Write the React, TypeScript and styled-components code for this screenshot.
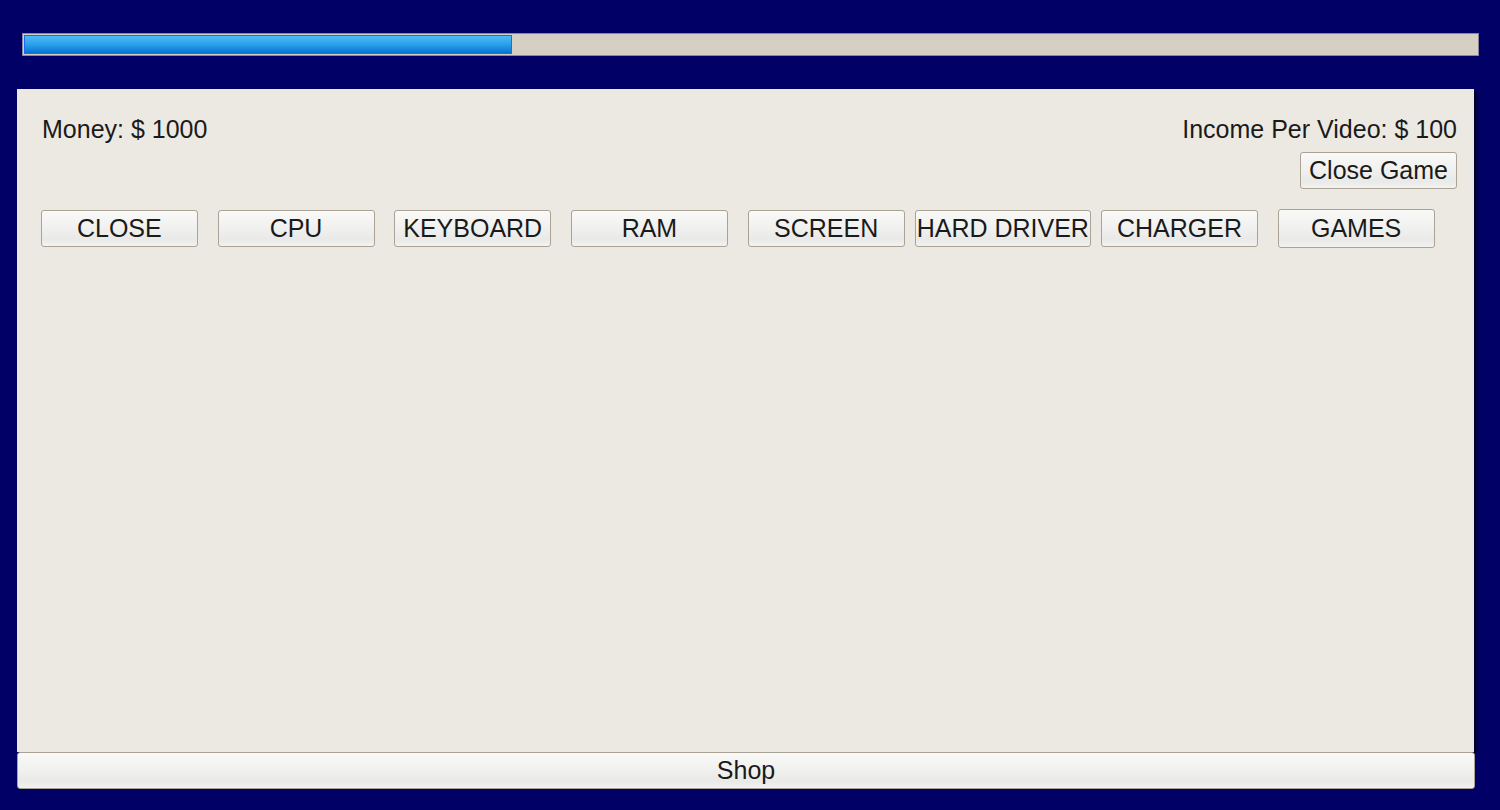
import React from "react";
import styled, { createGlobalStyle } from "styled-components";

const GlobalStyle = createGlobalStyle`
  html, body {
    margin: 0;
    padding: 0;
    background: #000066;
    font-family: "Liberation Sans", Arial, sans-serif;
  }
  #root {
    min-height: 100vh;
  }
`;

const Page = styled.div`
  padding: 33px 0 0 17px;
  width: 1458px;
`;

const ProgressTrack = styled.div`
  margin-left: 5px;
  width: 1457px;
  height: 23px;
  box-sizing: border-box;
  border: 1px solid #8c8798;
  background: #d6d0c4;
  padding: 1px;
`;

const ProgressFill = styled.div`
  height: 100%;
  box-sizing: border-box;
  border: 1px solid #2068ee;
  background: linear-gradient(to bottom, #4cbcf8 0%, #2aa0ea 50%, #0874d6 100%);
`;

const Panel = styled.div`
  margin-top: 33px;
  width: 1457px;
  height: 663px;
  box-sizing: border-box;
  padding: 26px 17px 0 25px;
  background: #ece9e2;
  box-shadow: 3px 2px 3px rgba(0, 0, 0, 0.55);
`;

const Header = styled.div`
  display: flex;
  justify-content: space-between;
  align-items: flex-start;
`;

const Label = styled.div`
  font-size: 25px;
  color: #1a1a1a;
  line-height: 28px;
`;

const RightColumn = styled.div`
  display: flex;
  flex-direction: column;
  align-items: flex-end;
  gap: 9px;
`;

const Button = styled.button<{ $tall?: boolean }>`
  font-family: "Liberation Sans", Arial, sans-serif;
  font-size: 25px;
  color: #1a1a1a;
  height: ${(p) => (p.$tall ? "39px" : "37px")};
  padding: 0 8px;
  box-sizing: border-box;
  background: linear-gradient(to bottom, #f9f9f8 0%, #f0f0ef 50%, #e9e9e8 80%, #f2f2f1 100%);
  border: 1px solid #aaa295;
  border-radius: 3px;
  cursor: pointer;
  white-space: nowrap;
`;

const PartGrid = styled.div`
  margin-top: 20px;
  margin-left: -11px;
  display: grid;
  grid-template-columns: repeat(8, 176.7px);
  justify-items: center;
  align-items: center;
`;

const PartButton = styled(Button)`
  min-width: 157px;
  padding: 0 1px;
`;

const ShopButton = styled(Button)`
  display: block;
  width: 1458px;
`;

const parts = ["CLOSE", "CPU", "KEYBOARD", "RAM", "SCREEN", "HARD DRIVER", "CHARGER", "GAMES"];

const App = () => {
  const progress = 33.6;

  return (
    <>
      <GlobalStyle />
      <Page>
        <ProgressTrack>
          <ProgressFill style={{ width: `${progress}%` }} />
        </ProgressTrack>
        <Panel>
          <Header>
            <Label>Money: $ 1000</Label>
            <RightColumn>
              <Label>Income Per Video: $ 100</Label>
              <Button>Close Game</Button>
            </RightColumn>
          </Header>
          <PartGrid>
            {parts.map((p) => (
              <PartButton key={p} $tall={p === "GAMES"}>
                {p}
              </PartButton>
            ))}
          </PartGrid>
        </Panel>
        <ShopButton>Shop</ShopButton>
      </Page>
    </>
  );
};

export default App;
